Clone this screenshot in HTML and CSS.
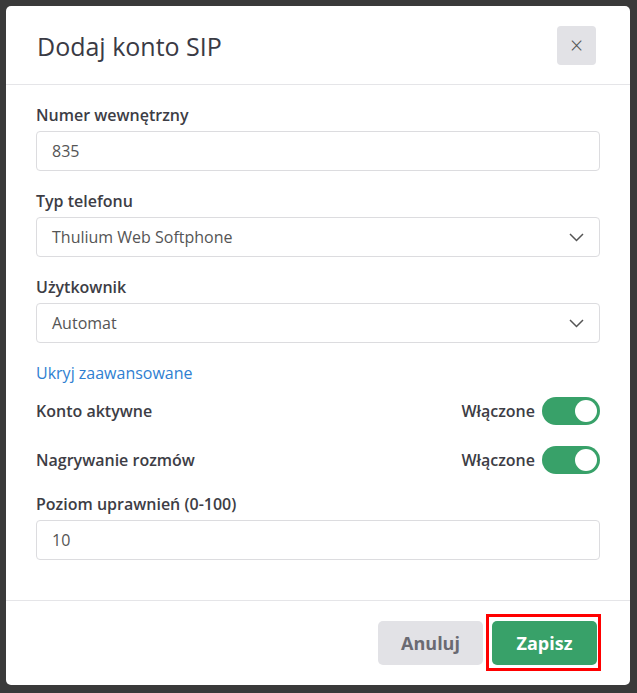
FILE: index.html
```html
<!DOCTYPE html>
<html lang="pl">
<head>
    <meta charset="UTF-8">
    <title>Dodaj konto SIP</title>
    <link rel="stylesheet" href="styles.css">
</head>
<body>
    <div class="modal">
        <div class="modal-header">
            <h1 class="modal-title">Dodaj konto SIP</h1>
            <button class="close-btn" type="button">&times;</button>
        </div>

        <div class="modal-body">
            <div class="form-group">
                <label class="form-label">Numer wewnętrzny</label>
                <div class="form-control">835</div>
            </div>

            <div class="form-group">
                <label class="form-label">Typ telefonu</label>
                <div class="form-control select">
                    <span>Thulium Web Softphone</span>
                    <svg class="chevron" width="15" height="9" viewBox="0 0 15 9">
                        <path d="M1 1 L7.5 7.5 L14 1" fill="none" stroke="#555" stroke-width="1.5"/>
                    </svg>
                </div>
            </div>

            <div class="form-group">
                <label class="form-label">Użytkownik</label>
                <div class="form-control select">
                    <span>Automat</span>
                    <svg class="chevron" width="15" height="9" viewBox="0 0 15 9">
                        <path d="M1 1 L7.5 7.5 L14 1" fill="none" stroke="#555" stroke-width="1.5"/>
                    </svg>
                </div>
            </div>

            <a class="advanced-link" href="#">Ukryj zaawansowane</a>

            <div class="switch-row">
                <span class="form-label">Konto aktywne</span>
                <span class="switch-wrap">
                    <span class="switch-text">Włączone</span>
                    <span class="switch"><span class="knob"></span></span>
                </span>
            </div>

            <div class="switch-row last">
                <span class="form-label">Nagrywanie rozmów</span>
                <span class="switch-wrap">
                    <span class="switch-text">Włączone</span>
                    <span class="switch"><span class="knob"></span></span>
                </span>
            </div>

            <div class="form-group">
                <label class="form-label">Poziom uprawnień (0-100)</label>
                <div class="form-control">10</div>
            </div>
        </div>

        <div class="modal-footer">
            <button class="btn btn-cancel" type="button">Anuluj</button>
            <span class="highlight">
                <button class="btn btn-save" type="button">Zapisz</button>
            </span>
        </div>
    </div>
</body>
</html>
```

FILE: styles.css
```css
body {
    margin: 0;
    background: #3a3a3a;
    font-family: "Open Sans", "Noto Sans", sans-serif;
    color: #3d3d45;
    padding: 6px 7px 8px 6px;
}

.modal {
    background: #fff;
    border-radius: 5px;
}

.modal-header {
    display: flex;
    align-items: center;
    justify-content: space-between;
    padding: 20px 34px 19px 31px;
    border-bottom: 1px solid #e5e5e8;
}
.modal-title {
    margin: 0;
    font-size: 25px;
    font-weight: 400;
    color: #3a3a44;
}
.close-btn {
    width: 39px;
    height: 39px;
    border: none;
    border-radius: 4px;
    background: #e2e2e6;
    color: #555;
    font-size: 23px;
    font-weight: 300;
    line-height: 1;
    font-family: "Open Sans", sans-serif;
    padding: 0;
}

.modal-body {
    padding: 18px 30px 40px 30px;
}

.form-group { margin-bottom: 18px; }
.form-group:last-child { margin-bottom: 0; }

.form-label {
    display: block;
    font-size: 16px;
    line-height: 24px;
    font-weight: 600;
    color: #3d3d45;
    margin-bottom: 4px;
}

.form-control {
    box-sizing: border-box;
    height: 40px;
    border: 1px solid #dcdcdf;
    border-radius: 4px;
    padding: 0 15px;
    display: flex;
    align-items: center;
    font-size: 16px;
    color: #555;
}
.select { justify-content: space-between; }

.advanced-link {
    display: block;
    font-size: 16px;
    line-height: 24px;
    color: #2f80d1;
    text-decoration: none;
    margin-bottom: 12px;
}

.switch-row {
    display: flex;
    align-items: center;
    justify-content: space-between;
    height: 28px;
    margin-bottom: 21px;
}
.switch-row.last { margin-bottom: 18px; }
.switch-row .form-label { margin-bottom: 0; }

.switch-wrap {
    display: flex;
    align-items: center;
    gap: 7px;
}
.switch-text {
    font-size: 16px;
    font-weight: 600;
    color: #3d3d45;
}
.switch {
    position: relative;
    width: 58px;
    height: 28px;
    border-radius: 14px;
    background: #38a169;
}
.knob {
    position: absolute;
    top: 3px;
    right: 3px;
    width: 22px;
    height: 22px;
    border-radius: 50%;
    background: #fff;
}

.modal-footer {
    display: flex;
    align-items: center;
    justify-content: flex-end;
    gap: 3px;
    padding: 13px 29px 14px 20px;
    border-top: 1px solid #e5e5e8;
}
.highlight {
    display: flex;
    border: 3px solid #ff0000;
    padding: 4px 1px 3px 3px;
}
.btn {
    width: 105px;
    height: 44px;
    border: none;
    border-radius: 5px;
    font-family: "Open Sans", "Noto Sans", sans-serif;
    font-size: 18px;
    font-weight: 700;
}
.btn-cancel {
    background: #e2e2e6;
    color: #6a6a72;
}
.btn-save {
    background: #38a169;
    color: #fff;
}
```
